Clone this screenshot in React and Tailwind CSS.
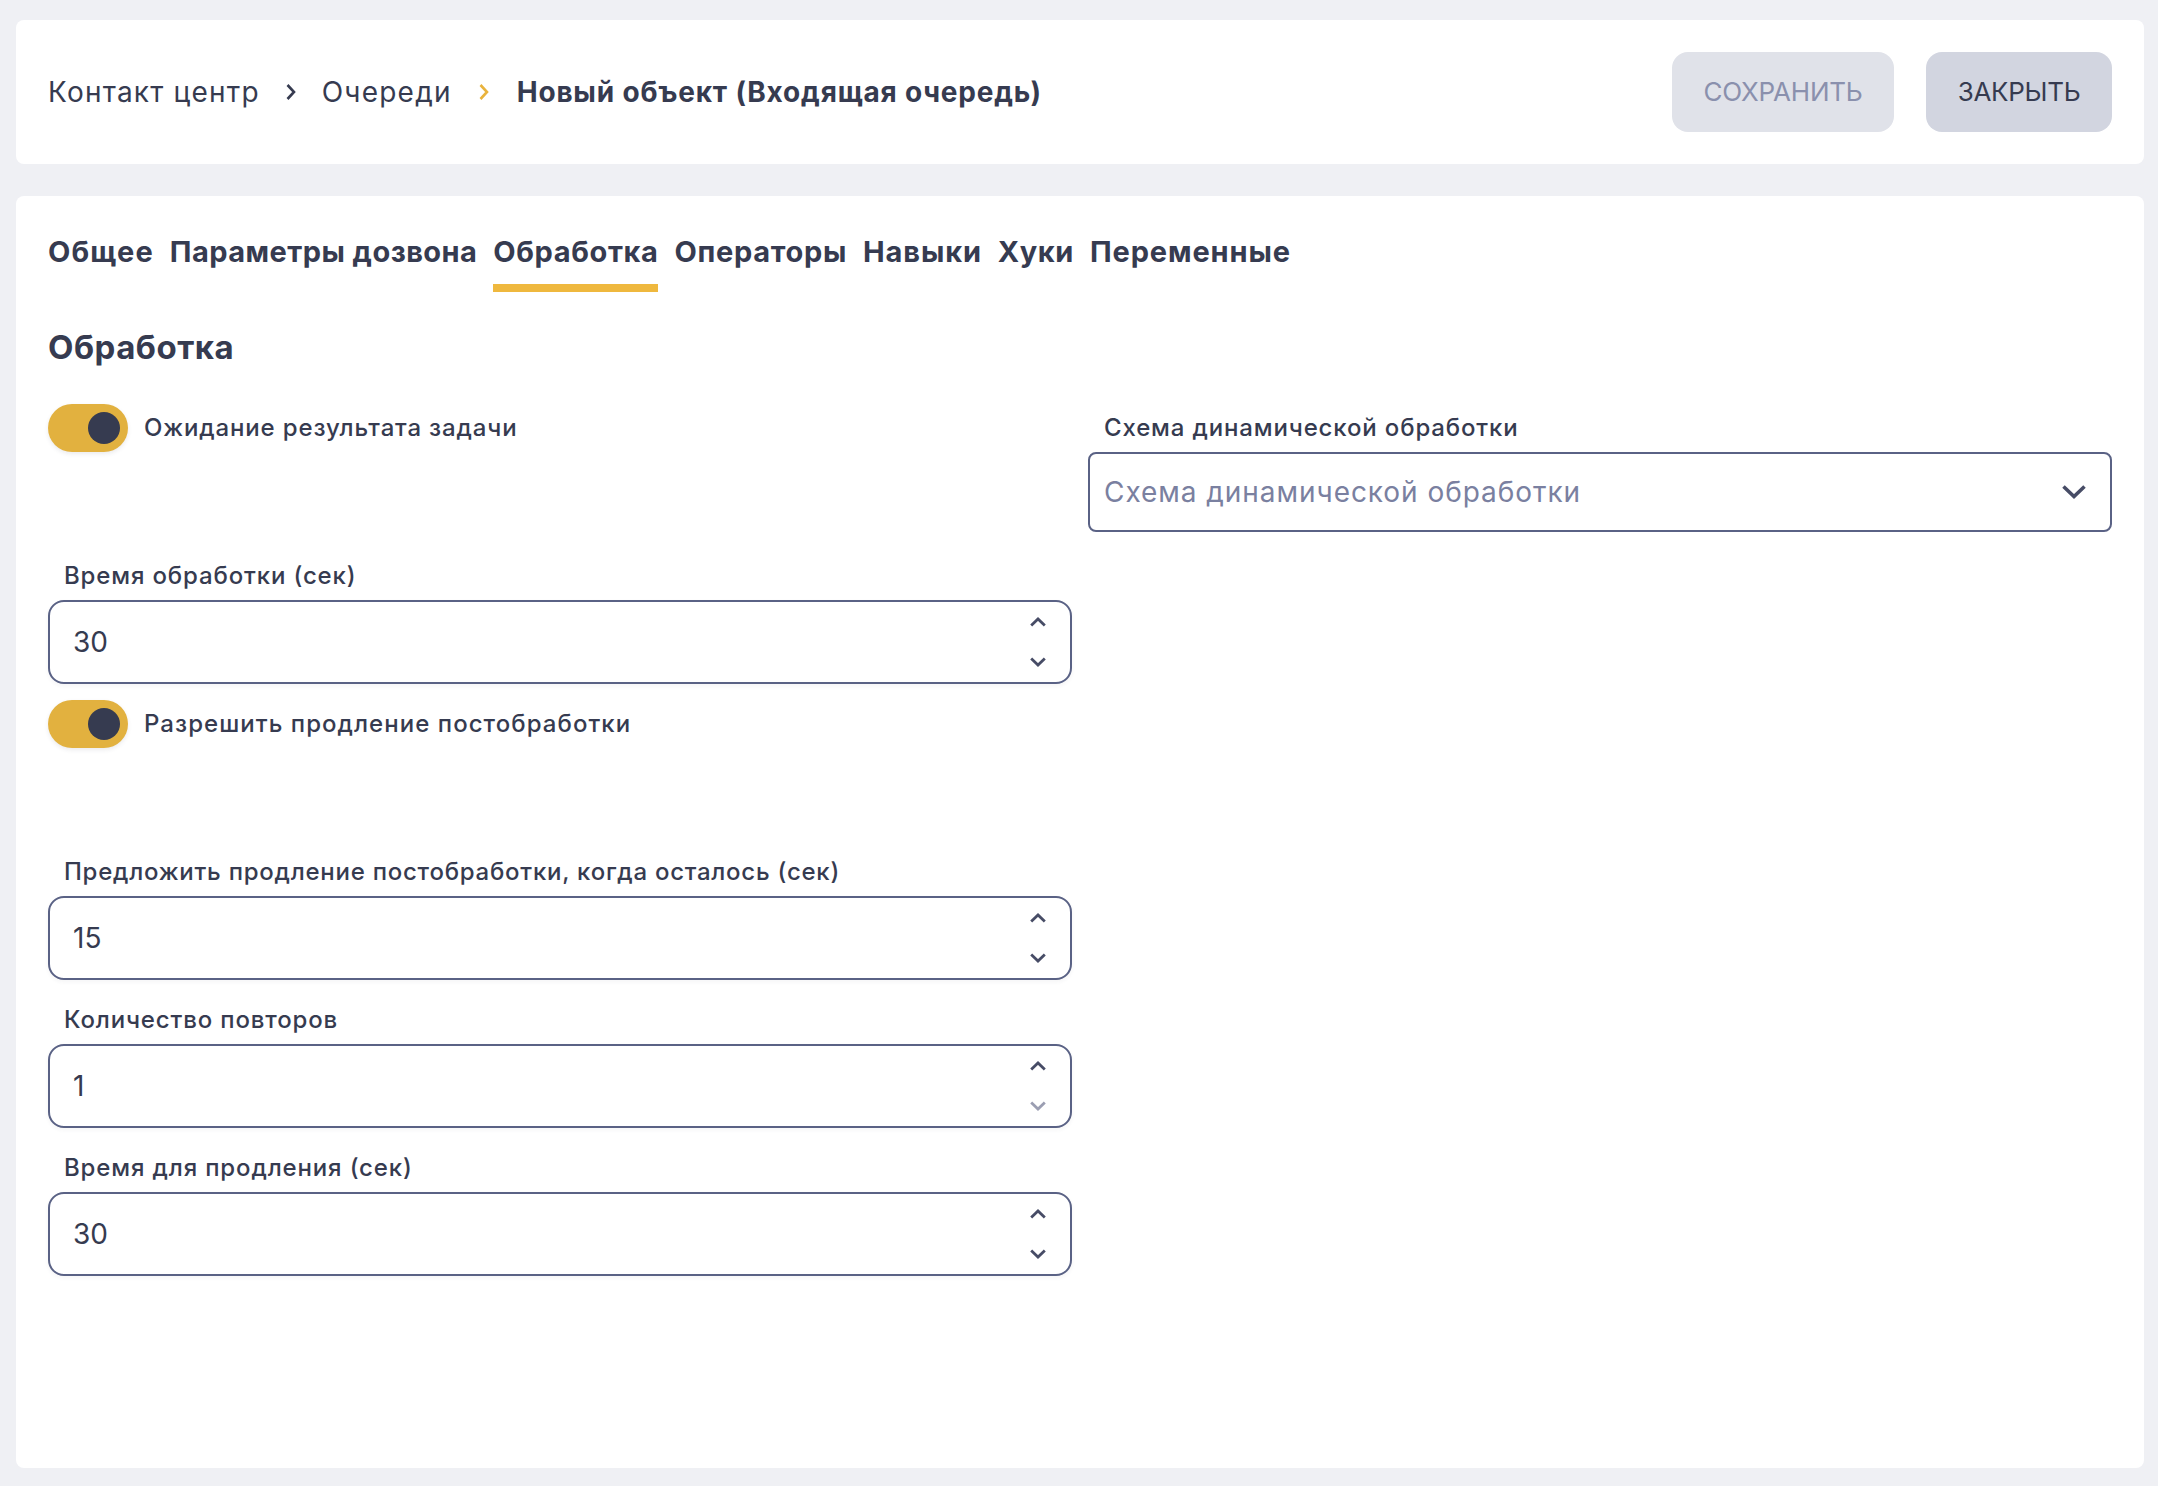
import React from "react";

const tabs = [
    { name: "Общее", spacing: "tracking-[1.15px]" },
    { name: "Параметры дозвона", spacing: "tracking-[0.45px]" },
    { name: "Обработка", spacing: "tracking-[0.6px]" },
    { name: "Операторы", spacing: "tracking-[0.7px]" },
    { name: "Навыки", spacing: "tracking-[0.85px]" },
    { name: "Хуки", spacing: "tracking-[0.6px]" },
    { name: "Переменные", spacing: "tracking-[0.87px]" },
];

function Crumb({ orange }) {
    return (
        <svg width="12" height="18" viewBox="0 0 12 18" fill="none" className={orange ? "text-[#E9B33C]" : "text-[#363B50]"}>
            <path d="M2.5 2 L9 9 L2.5 16" stroke="currentColor" strokeWidth="2.6" />
        </svg>
    );
}

function Spin({ down, disabled }) {
    return (
        <svg width="16" height="10" viewBox="0 0 16 10" fill="none" className={disabled ? "text-[#9B9EB2]" : "text-[#474C66]"}>
            <path d={down ? "M1.2 1.5 L8 8 L14.8 1.5" : "M1.2 8.5 L8 2 L14.8 8.5"} stroke="currentColor" strokeWidth="2.8" />
        </svg>
    );
}

function Toggle({ label, spacing = "tracking-[0.85px]" }) {
    return (
        <div className="flex h-[132px] items-start">
            <div className="flex h-12 w-20 items-center justify-end rounded-full bg-[#E2B13F] pr-2 shadow-[0_2px_4px_rgba(54,59,80,0.1)]">
                <div className="h-8 w-8 rounded-full bg-[#363B50]" />
            </div>
            <span className={`ml-4 text-[24px] leading-[48px] font-medium text-[#363B50] ${spacing}`}>{label}</span>
        </div>
    );
}

function NumberField({ label, value, downDisabled, spacing = "tracking-[0.85px]" }) {
    return (
        <div>
            <div className={`h-12 pl-4 text-[24px] leading-[48px] font-medium text-[#363B50] ${spacing}`}>{label}</div>
            <div className="flex h-[84px] items-center rounded-2xl border-2 border-[#5A6285] bg-white pr-6 pl-[23px] shadow-[0_2px_4px_rgba(54,59,80,0.05)]">
                <input readOnly value={value} className="min-w-0 flex-1 bg-transparent text-[28px] text-[#363B50] outline-none" />
                <div className="flex flex-col gap-[30px]">
                    <Spin />
                    <Spin down disabled={downDisabled} />
                </div>
            </div>
        </div>
    );
}

export default function App() {
    return (
        <div className="min-h-[1486px] bg-[#EFF0F4] pt-5 pr-[14px] pb-[18px] pl-4 [font-family:Inter,sans-serif]">
            <div className="flex h-36 items-center justify-between rounded-lg bg-white px-8">
                <div className="flex items-center text-[28px] tracking-[1.2px] text-[#363B50]">
                    <span>Контакт центр</span>
                    <span className="mx-[25px] flex"><Crumb /></span>
                    <span>Очереди</span>
                    <span className="mx-[26px] flex"><Crumb orange /></span>
                    <span className="ml-px font-bold tracking-[0.82px]">Новый объект (Входящая очередь)</span>
                </div>
                <div className="flex gap-8">
                    <button className="h-20 w-[222px] rounded-2xl bg-[#E0E2E9] pb-0.5 text-[26px] tracking-[-0.2px] text-[#8A90AD]">СОХРАНИТЬ</button>
                    <button className="h-20 w-[186px] rounded-2xl bg-[#D2D5E0] pb-0.5 text-[26px] tracking-[-0.3px] text-[#363B50]">ЗАКРЫТЬ</button>
                </div>
            </div>

            <div className="mt-8 h-[1272px] rounded-lg bg-white p-8">
                <div className="flex gap-4">
                    {tabs.map(t => (
                        <div key={t.name} className={`h-16 border-b-8 text-[29px] leading-[48px] font-bold text-[#363B50] ${t.spacing} ${t.name === "Обработка" ? "border-[#EFB83E]" : "border-transparent"}`}>
                            {t.name}
                        </div>
                    ))}
                </div>
                <h2 className="mt-8 mb-8 h-12 text-[33px] leading-[46px] font-bold tracking-[0.5px] text-[#363B50]">Обработка</h2>

                <div className="grid grid-cols-2 gap-x-4 gap-y-4">
                    <Toggle label="Ожидание результата задачи" />
                    <div className="h-[132px]">
                        <div className="h-12 pl-4 text-[24px] leading-[48px] font-medium tracking-[0.85px] text-[#363B50]">Схема динамической обработки</div>
                        <div className="flex h-20 items-center justify-between rounded-lg border-2 border-[#5A6285] pr-6 pl-[14px]">
                            <span className="text-[28px] tracking-[0.95px] text-[#7A80A0]">Схема динамической обработки</span>
                            <svg width="24" height="14" viewBox="0 0 24 14" fill="none" className="text-[#474C66]">
                                <path d="M1.5 1.5 L12 11.5 L22.5 1.5" stroke="currentColor" strokeWidth="3.6" />
                            </svg>
                        </div>
                    </div>

                    <NumberField label="Время обработки (сек)" value="30" />
                    <div />

                    <Toggle label="Разрешить продление постобработки" spacing="tracking-[1.05px]" />
                    <div />

                    <NumberField label="Предложить продление постобработки, когда осталось (сек)" value="15" spacing="tracking-[0.75px]" />
                    <div />

                    <NumberField label="Количество повторов" value="1" downDisabled />
                    <div />

                    <NumberField label="Время для продления (сек)" value="30" />
                    <div />
                </div>
            </div>
        </div>
    );
}
